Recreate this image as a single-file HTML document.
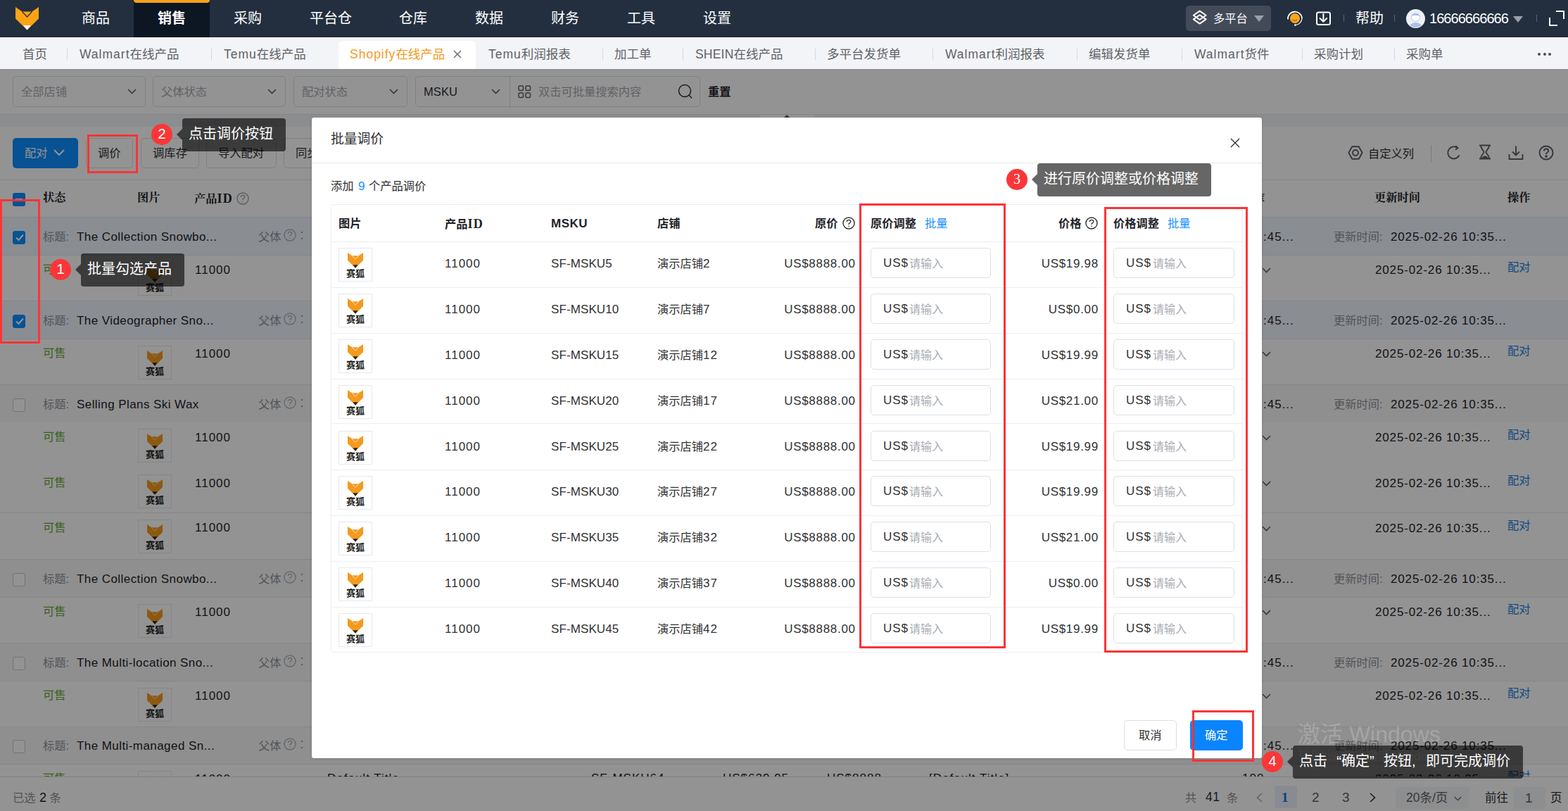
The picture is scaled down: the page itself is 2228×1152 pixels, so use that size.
<!DOCTYPE html><html><head><meta charset="utf-8"><title>批量调价</title><style>
*{box-sizing:border-box;margin:0;padding:0}
html,body{width:2228px;height:1152px;overflow:hidden;background:#fff}
body{position:relative;font-family:"Liberation Sans","Noto Sans CJK SC",sans-serif;color:#303133;font-size:16.25px}
.abs,.t,.b{position:absolute}
.t{white-space:nowrap;line-height:1}
.se{font-family:"Liberation Serif","Noto Serif CJK SC",serif;font-weight:bold}
svg{position:absolute;overflow:visible}
.nav{left:0;top:0;width:2228px;height:53px;background:#232f3f}
.navi{color:#fff;font-size:20px;top:16px}
.tabbar{left:0;top:53px;width:2228px;height:45px;background:#f3f4f8}
.tab{font-size:17.5px;color:#5f6266}
.tdv{top:69px;width:1px;height:17px;background:#d6d8dd}
.sel{top:108px;height:44px;border:1px solid #dcdfe6;border-radius:5px;background:#fff}
.ph{color:#a8abb2;font-size:16.25px;top:122px}
.btn{top:196px;height:43px;border:1px solid #dcdfe6;border-radius:5px;background:#fff}
.btx{top:209px;font-size:16.25px;color:#303133}
.hd{font-size:16.25px;color:#1f2329}
.grow{left:0;width:2228px;height:54px;border-bottom:1px solid #e6e8ec;background:#f8f8f9}
.grow.on{background:#eff4fd}
.crow{left:0;width:2228px;height:65px;border-bottom:1px solid #e6e8ec;background:#fff}
.lb{color:#909399}
.v{letter-spacing:1px;font-size:17px}
.vt{letter-spacing:.43px;font-size:17px}
.vu{letter-spacing:.1px;font-size:17px}
.la{letter-spacing:1px}
.grn{color:#67a83a}
.lnk{color:#1d7fe0}
.cb{left:18px;width:18px;height:19px;border:1px solid #c5c8ce;border-radius:3px;background:#fff}
.cb.on{background:#0c8eff;border-color:#0c8eff}
.th{width:48px;height:48px;border:1px solid #e7e8eb;background:#fff}
.thx{font-size:13px;font-weight:bold;color:#222;letter-spacing:0}
.mh{font-weight:bold;font-size:16.25px;color:#1f2329;top:309px}
.inp{width:171px;height:43px;border:1px solid #dcdfe6;border-radius:5px;background:#fff}
.red{border:3px solid #fd3437}
.tip{border-radius:4px;background:rgba(0,0,0,.6);color:#fff;font-size:20px}
.cir{width:30px;height:30px;border-radius:50%;background:#fb3638;color:#fff;font-size:20px;text-align:center;line-height:30px}
</style></head><body>
<div class="b nav" style="left:0px;top:0px;width:2228px;height:53px;"></div>
<div class="b " style="left:190px;top:0px;width:108px;height:53px;background:#0d1623"></div>
<div class="b " style="left:190px;top:0px;width:108px;height:4px;background:#f9a11b;border-radius:0 0 4px 4px"></div>
<svg style="left:22px;top:9.5px" width="33" height="32.5" viewBox="0 0 33 32.5"><path d="M0 0 L9.5 6.5 L23.5 6.5 L33 0 L33 16.5 L16.5 32.5 L0 16.5Z" fill="#ffa216"/><path d="M9.5 6.5 L16.5 14 L23.5 6.5" fill="none" stroke="#232f3f" stroke-width="1.2"/><path d="M11 26 L22 26 L16.5 32.5Z" fill="#fff"/></svg>
<div class="t navi" style="left:116.0px;top:15.5px;">商品</div>
<div class="t navi" style="left:224.0px;top:15.5px;font-weight:bold">销售</div>
<div class="t navi" style="left:332.0px;top:15.5px;">采购</div>
<div class="t navi" style="left:440.0px;top:15.5px;">平台仓</div>
<div class="t navi" style="left:567.0px;top:15.5px;">仓库</div>
<div class="t navi" style="left:675.0px;top:15.5px;">数据</div>
<div class="t navi" style="left:783.0px;top:15.5px;">财务</div>
<div class="t navi" style="left:891.0px;top:15.5px;">工具</div>
<div class="t navi" style="left:999.0px;top:15.5px;">设置</div>
<div class="b " style="left:1685px;top:8px;width:121px;height:36px;background:#434b58;border-radius:5px"></div>
<svg style="left:1694px;top:14px" width="22" height="22" viewBox="0 0 22 22" fill="none" stroke="#fff" stroke-width="2" stroke-linejoin="round"><path d="M10.7 1.6 L19.6 7.8 L10.7 14 L1.8 7.8Z"/><path d="M10.7 7.2 L19.6 13.4 L10.7 19.6 L1.8 13.4Z"/></svg>
<div class="t " style="left:1724px;top:18px;color:#fff;font-size:16.25px">多平台</div>
<svg style="left:1782px;top:22px" width="14" height="9" viewBox="0 0 14 9"><path d="M0 0H14L7 9Z" fill="#9aa0a9"/></svg>
<svg style="left:1828px;top:14px" width="24" height="24" viewBox="0 0 24 24"><circle cx="12" cy="12" r="7" fill="#fba61c"/><path d="M2 13.5 A10 10 0 0 1 22 12" fill="none" stroke="#fff" stroke-width="1.8"/><path d="M22 12 A10 10 0 0 1 12.5 21.6" fill="none" stroke="#fff" stroke-width="1.2"/><circle cx="12.3" cy="21.6" r="1.3" fill="#fff"/><path d="M9 14 Q12 16.8 15 14" fill="none" stroke="#a86400" stroke-width="1.1"/></svg>
<svg style="left:1869px;top:15px" width="23" height="22" viewBox="0 0 23 22" fill="none" stroke="#fff" stroke-width="2" stroke-linecap="round" stroke-linejoin="round"><rect x="2" y="2.5" width="19" height="17.5" rx="2.5"/><path d="M11.4 5V15.5M6.6 11L11.4 15.8L16.2 11"/></svg>
<div class="b " style="left:1909px;top:21px;width:1px;height:10px;background:#5a6471"></div>
<div class="t navi" style="left:1926px;top:15.5px;">帮助</div>
<div class="b " style="left:1981px;top:21px;width:1px;height:10px;background:#5a6471"></div>
<svg style="left:1998px;top:13px" width="27" height="27" viewBox="0 0 27 27"><circle cx="13.5" cy="13.5" r="13.5" fill="#eef1f6"/><circle cx="13.5" cy="11.5" r="6" fill="#fff" stroke="#b9c9e6" stroke-width="1"/><path d="M7.5 9.5 Q13.5 3 19.5 9.5 Q14 8 7.5 9.5Z" fill="#9db7e6"/><path d="M5 23 Q13.5 15 22 23 Q13.5 29 5 23Z" fill="#a9c0ea"/></svg>
<div class="t navi" style="left:2031px;top:16px;letter-spacing:-.95px;font-size:20px">16666666666</div>
<svg style="left:2150px;top:23px" width="14" height="9" viewBox="0 0 14 9"><path d="M0 0H14L7 9Z" fill="#9aa0a9"/></svg>
<div class="b " style="left:2183px;top:21px;width:1px;height:10px;background:#5a6471"></div>
<svg style="left:2201px;top:15px" width="22" height="22" viewBox="0 0 22 22" fill="none" stroke="#fff" stroke-width="2"><path d="M10 1H21V12M1 10V21H12"/></svg>
<div class="b tabbar" style="left:0px;top:53px;width:2228px;height:45px;"></div>
<div class="b " style="left:481px;top:58px;width:195px;height:40px;background:#fff;border-radius:6px 6px 0 0"></div>
<div class="t tab" style="left:32px;top:68.7px;">首页</div>
<div class="t tab" style="left:113px;top:68.7px;"><span class="la">Walmart</span>在线产品</div>
<div class="t tab" style="left:318px;top:68.7px;"><span class="la">Temu</span>在线产品</div>
<div class="t tab" style="left:497px;top:68.7px;color:#f59a23"><span class="la">Shopify</span>在线产品</div>
<div class="t tab" style="left:694px;top:68.7px;"><span class="la">Temu</span>利润报表</div>
<div class="t tab" style="left:873px;top:68.7px;">加工单</div>
<div class="t tab" style="left:988px;top:68.7px;"><span style="letter-spacing:.2px">SHEIN</span>在线产品</div>
<div class="t tab" style="left:1175px;top:68.7px;">多平台发货单</div>
<div class="t tab" style="left:1343px;top:68.7px;"><span class="la">Walmart</span>利润报表</div>
<div class="t tab" style="left:1547px;top:68.7px;">编辑发货单</div>
<div class="t tab" style="left:1697px;top:68.7px;"><span class="la">Walmart</span>货件</div>
<div class="t tab" style="left:1867px;top:68.7px;">采购计划</div>
<div class="t tab" style="left:1998px;top:68.7px;">采购单</div>
<div class="b tdv" style="left:95px;top:69px;width:1px;height:17px;"></div>
<div class="b tdv" style="left:300px;top:69px;width:1px;height:17px;"></div>
<div class="b tdv" style="left:856px;top:69px;width:1px;height:17px;"></div>
<div class="b tdv" style="left:970px;top:69px;width:1px;height:17px;"></div>
<div class="b tdv" style="left:1158px;top:69px;width:1px;height:17px;"></div>
<div class="b tdv" style="left:1325px;top:69px;width:1px;height:17px;"></div>
<div class="b tdv" style="left:1530px;top:69px;width:1px;height:17px;"></div>
<div class="b tdv" style="left:1679px;top:69px;width:1px;height:17px;"></div>
<div class="b tdv" style="left:1850px;top:69px;width:1px;height:17px;"></div>
<div class="b tdv" style="left:1981px;top:69px;width:1px;height:17px;"></div>
<svg style="left:644px;top:71px" width="12" height="12" viewBox="0 0 12 12" stroke="#6b6e73" stroke-width="1.5"><path d="M1 1L11 11M11 1L1 11"/></svg>
<div class="b " style="left:2185.0px;top:75px;width:4px;height:4px;background:#4a4d52;border-radius:50%"></div>
<div class="b " style="left:2192.5px;top:75px;width:4px;height:4px;background:#4a4d52;border-radius:50%"></div>
<div class="b " style="left:2200.0px;top:75px;width:4px;height:4px;background:#4a4d52;border-radius:50%"></div>
<div class="b " style="left:0px;top:98px;width:2228px;height:65px;background:#fff;border-bottom:1px solid #e4e7ed"></div>
<div class="b " style="left:0px;top:163px;width:2228px;height:17px;background:#f3f4f7"></div>
<div class="b " style="left:1079px;top:163px;width:78px;height:4px;background:#fff"></div>
<svg style="left:1113px;top:163px" width="10" height="5" viewBox="0 0 10 5"><path d="M0 5L5 0L10 5Z" fill="#606266"/></svg>
<div class="b sel" style="left:18px;top:108px;width:189px;height:44px;"></div>
<div class="t ph" style="left:30px;top:122px;">全部店铺</div>
<svg style="left:181px;top:126px" width="13" height="8" viewBox="0 0 13 8" fill="none" stroke="#606266" stroke-width="1.6"><path d="M1 1L6.5 6.5L12 1"/></svg>
<div class="b sel" style="left:217px;top:108px;width:189px;height:44px;"></div>
<div class="t ph" style="left:229px;top:122px;">父体状态</div>
<svg style="left:380px;top:126px" width="13" height="8" viewBox="0 0 13 8" fill="none" stroke="#606266" stroke-width="1.6"><path d="M1 1L6.5 6.5L12 1"/></svg>
<div class="b sel" style="left:417px;top:108px;width:162px;height:44px;"></div>
<div class="t ph" style="left:429px;top:122px;">配对状态</div>
<svg style="left:553px;top:126px" width="13" height="8" viewBox="0 0 13 8" fill="none" stroke="#606266" stroke-width="1.6"><path d="M1 1L6.5 6.5L12 1"/></svg>
<div class="b sel" style="left:590px;top:108px;width:405px;height:44px;"></div>
<div class="b " style="left:724px;top:108px;width:1px;height:44px;background:#dcdfe6"></div>
<div class="t v" style="left:602px;top:122px;color:#303133;font-size:16.5px;letter-spacing:.1px">MSKU</div>
<svg style="left:698px;top:126px" width="13" height="8" viewBox="0 0 13 8" fill="none" stroke="#606266" stroke-width="1.6"><path d="M1 1L6.5 6.5L12 1"/></svg>
<svg style="left:736px;top:121px" width="19" height="19" viewBox="0 0 19 19" fill="none" stroke="#606266" stroke-width="1.5"><rect x="1" y="1" width="6.5" height="6.5" rx="1.5"/><rect x="11" y="1" width="6.5" height="6.5" rx="1.5"/><rect x="1" y="11" width="6.5" height="6.5" rx="1.5"/><rect x="11" y="11" width="6.5" height="6.5" rx="1.5"/></svg>
<div class="t ph" style="left:765px;top:122px;">双击可批量搜索内容</div>
<svg style="left:963px;top:119px" width="22" height="22" viewBox="0 0 22 22" fill="none" stroke="#303133" stroke-width="1.5"><circle cx="10" cy="10" r="8.5"/><path d="M16 16L20 20.5"/></svg>
<div class="t " style="left:1006px;top:122px;font-weight:bold;color:#1f2329">重置</div>
<div class="b " style="left:0px;top:180px;width:2228px;height:76px;background:#fff;border-bottom:1px solid #e4e7ed"></div>
<div class="b " style="left:18px;top:196px;width:93px;height:43px;background:#0c8eff;border-radius:5px"></div>
<div class="t btx" style="left:35px;top:209px;color:#fff">配对</div>
<svg style="left:76px;top:212px" width="16" height="10" viewBox="0 0 16 10" fill="none" stroke="#fff" stroke-width="2"><path d="M1 1L8 8L15 1"/></svg>
<div class="b btn" style="left:122px;top:196px;width:67px;height:43px;"></div>
<div class="t btx" style="left:139px;top:209px;">调价</div>
<div class="b btn" style="left:200px;top:196px;width:83px;height:43px;"></div>
<div class="t btx" style="left:217px;top:209px;">调库存</div>
<div class="b btn" style="left:293px;top:196px;width:100px;height:43px;"></div>
<div class="t btx" style="left:310px;top:209px;">导入配对</div>
<div class="b btn" style="left:403px;top:196px;width:100px;height:43px;"></div>
<div class="t btx" style="left:420px;top:209px;">同步</div>
<svg style="left:1915px;top:206px" width="22" height="22" viewBox="0 0 22 22" fill="none" stroke="#5d6066" stroke-width="1.9" stroke-linejoin="round"><path d="M6.2 2.2H15.8L20.6 11L15.8 19.8H6.2L1.4 11Z"/><circle cx="11" cy="11" r="4"/></svg>
<div class="t btx" style="left:1944px;top:210px;">自定义列</div>
<div class="b " style="left:2033px;top:206px;width:1px;height:24px;background:#d0d3d9"></div>
<svg style="left:2055px;top:206px" width="22" height="22" viewBox="0 0 22 22" fill="none" stroke="#5d6066" stroke-width="1.9"><path d="M18.5 14.5A8.5 8.5 0 1 1 16 4.2"/><path d="M13.2 1.2L16.6 4.3L13 6.8" stroke-linejoin="round"/></svg>
<svg style="left:2100px;top:205px" width="20" height="22" viewBox="0 0 20 22" fill="none" stroke="#5d6066" stroke-width="1.9" stroke-linejoin="round"><path d="M2 1.5H18M2 20.5H18M4 1.5C4 7 8.5 8.5 8.5 11C8.5 13.5 4 15 4 20.5M16 1.5C16 7 11.5 8.5 11.5 11C11.5 13.5 16 15 16 20.5"/><path d="M6.5 19.5Q10 15.5 13.5 19.5Z" fill="#5d6066"/></svg>
<svg style="left:2143px;top:206px" width="22" height="22" viewBox="0 0 22 22" fill="none" stroke="#5d6066" stroke-width="1.9"><path d="M11 1.5V14M6 9.5L11 14.5L16 9.5M1.5 13V20H20.5V13"/></svg>
<svg style="left:2186px;top:206px" width="22" height="22" viewBox="0 0 22 22" fill="none" stroke="#5d6066" stroke-width="1.9"><circle cx="11" cy="11" r="9.5"/><path d="M7.8 8.5Q8 5.5 11 5.5Q14.2 5.5 14.2 8.3Q14.2 10 11.8 11.2Q11 11.7 11 13.2"/><circle cx="11" cy="16" r=".9" fill="#5d6066"/></svg>
<div class="b " style="left:0px;top:256px;width:2228px;height:53px;background:#fff;border-bottom:1px solid #e4e7ed"></div>
<div class="b " style="left:18px;top:274px;width:18px;height:19px;background:#0c8eff;border-radius:3px"></div>
<div class="b " style="left:22px;top:281.5px;width:10px;height:2.5px;background:#fff"></div>
<div class="t hd se" style="left:61px;top:273px;">状态</div>
<div class="t hd se" style="left:195px;top:273px;">图片</div>
<div class="t hd se" style="left:276px;top:273px;">产品<span style="font-size:18px;letter-spacing:1.2px">ID</span></div>
<svg style="left:336px;top:273px" width="18" height="18" viewBox="0 0 18 18" fill="none" stroke="#a0a3a9" stroke-width="1.4"><circle cx="9" cy="9" r="8"/><path d="M6.3 7Q6.5 4.4 9 4.4Q11.7 4.4 11.7 6.8Q11.7 8.2 9.8 9.2Q9 9.7 9 11"/><circle cx="9" cy="13.3" r=".8" fill="#a0a3a9" stroke="none"/></svg>
<div class="b" style="left:1793px;top:270px;width:5px;height:24px;overflow:hidden"><div class="t hd se" style="left:-12px;top:4.5px">库</div></div>
<div class="t hd se" style="left:1953px;top:273px;">更新时间</div>
<div class="t hd se" style="left:2142px;top:273px;">操作</div>
<div class="b grow on" style="left:0px;top:309px;width:2228px;height:54px;"></div>
<div class="b cb on" style="left:18px;top:328px;width:18px;height:19px;"><svg style="left:3px;top:3px" width="12" height="11" viewBox="0 0 12 11" fill="none" stroke="#fff" stroke-width="2"><path d="M1 5.5L4.5 9L11 1.5"/></svg></div>
<div class="t lb" style="left:61px;top:328px;">标题:</div>
<div class="t vt" style="left:109px;top:328px;color:#1f2329">The Collection Snowbo...</div>
<div class="t lb" style="left:367px;top:328px;">父体</div>
<svg style="left:403px;top:325px" width="18" height="18" viewBox="0 0 18 18" fill="none" stroke="#b0b4bb" stroke-width="1.4"><circle cx="9" cy="9" r="8"/><path d="M6.3 7Q6.5 4.4 9 4.4Q11.7 4.4 11.7 6.8Q11.7 8.2 9.8 9.2Q9 9.7 9 11"/><circle cx="9" cy="13.3" r=".8" fill="#b0b4bb" stroke="none"/></svg>
<div class="b " style="left:428px;top:329px;width:2px;height:2px;background:#9a9da3"></div>
<div class="b " style="left:428px;top:338px;width:2px;height:2px;background:#9a9da3"></div>
<div class="t v" style="left:1795px;top:328px;color:#1f2329">:45...</div>
<div class="t lb" style="left:1895px;top:328px;">更新时间:</div>
<div class="t v" style="left:1976px;top:328px;color:#1f2329;letter-spacing:.85px">2025-02-26 10:35...</div>
<div class="b grow on" style="left:0px;top:428px;width:2228px;height:54px;"></div>
<div class="b cb on" style="left:18px;top:447px;width:18px;height:19px;"><svg style="left:3px;top:3px" width="12" height="11" viewBox="0 0 12 11" fill="none" stroke="#fff" stroke-width="2"><path d="M1 5.5L4.5 9L11 1.5"/></svg></div>
<div class="t lb" style="left:61px;top:447px;">标题:</div>
<div class="t vt" style="left:109px;top:447px;color:#1f2329">The Videographer Sno...</div>
<div class="t lb" style="left:367px;top:447px;">父体</div>
<svg style="left:403px;top:444px" width="18" height="18" viewBox="0 0 18 18" fill="none" stroke="#b0b4bb" stroke-width="1.4"><circle cx="9" cy="9" r="8"/><path d="M6.3 7Q6.5 4.4 9 4.4Q11.7 4.4 11.7 6.8Q11.7 8.2 9.8 9.2Q9 9.7 9 11"/><circle cx="9" cy="13.3" r=".8" fill="#b0b4bb" stroke="none"/></svg>
<div class="b " style="left:428px;top:448px;width:2px;height:2px;background:#9a9da3"></div>
<div class="b " style="left:428px;top:457px;width:2px;height:2px;background:#9a9da3"></div>
<div class="t v" style="left:1795px;top:447px;color:#1f2329">:45...</div>
<div class="t lb" style="left:1895px;top:447px;">更新时间:</div>
<div class="t v" style="left:1976px;top:447px;color:#1f2329;letter-spacing:.85px">2025-02-26 10:35...</div>
<div class="b grow" style="left:0px;top:547px;width:2228px;height:54px;"></div>
<div class="b cb" style="left:18px;top:566px;width:18px;height:19px;"></div>
<div class="t lb" style="left:61px;top:566px;">标题:</div>
<div class="t vt" style="left:109px;top:566px;color:#1f2329">Selling Plans Ski Wax</div>
<div class="t lb" style="left:367px;top:566px;">父体</div>
<svg style="left:403px;top:563px" width="18" height="18" viewBox="0 0 18 18" fill="none" stroke="#b0b4bb" stroke-width="1.4"><circle cx="9" cy="9" r="8"/><path d="M6.3 7Q6.5 4.4 9 4.4Q11.7 4.4 11.7 6.8Q11.7 8.2 9.8 9.2Q9 9.7 9 11"/><circle cx="9" cy="13.3" r=".8" fill="#b0b4bb" stroke="none"/></svg>
<div class="b " style="left:428px;top:567px;width:2px;height:2px;background:#9a9da3"></div>
<div class="b " style="left:428px;top:576px;width:2px;height:2px;background:#9a9da3"></div>
<div class="t v" style="left:1795px;top:566px;color:#1f2329">:45...</div>
<div class="t lb" style="left:1895px;top:566px;">更新时间:</div>
<div class="t v" style="left:1976px;top:566px;color:#1f2329;letter-spacing:.85px">2025-02-26 10:35...</div>
<div class="b grow" style="left:0px;top:795px;width:2228px;height:54px;"></div>
<div class="b cb" style="left:18px;top:814px;width:18px;height:19px;"></div>
<div class="t lb" style="left:61px;top:814px;">标题:</div>
<div class="t vt" style="left:109px;top:814px;color:#1f2329">The Collection Snowbo...</div>
<div class="t lb" style="left:367px;top:814px;">父体</div>
<svg style="left:403px;top:811px" width="18" height="18" viewBox="0 0 18 18" fill="none" stroke="#b0b4bb" stroke-width="1.4"><circle cx="9" cy="9" r="8"/><path d="M6.3 7Q6.5 4.4 9 4.4Q11.7 4.4 11.7 6.8Q11.7 8.2 9.8 9.2Q9 9.7 9 11"/><circle cx="9" cy="13.3" r=".8" fill="#b0b4bb" stroke="none"/></svg>
<div class="b " style="left:428px;top:815px;width:2px;height:2px;background:#9a9da3"></div>
<div class="b " style="left:428px;top:824px;width:2px;height:2px;background:#9a9da3"></div>
<div class="t v" style="left:1795px;top:814px;color:#1f2329">:45...</div>
<div class="t lb" style="left:1895px;top:814px;">更新时间:</div>
<div class="t v" style="left:1976px;top:814px;color:#1f2329;letter-spacing:.85px">2025-02-26 10:35...</div>
<div class="b grow" style="left:0px;top:914px;width:2228px;height:54px;"></div>
<div class="b cb" style="left:18px;top:933px;width:18px;height:19px;"></div>
<div class="t lb" style="left:61px;top:933px;">标题:</div>
<div class="t vt" style="left:109px;top:933px;color:#1f2329">The Multi-location Sno...</div>
<div class="t lb" style="left:367px;top:933px;">父体</div>
<svg style="left:403px;top:930px" width="18" height="18" viewBox="0 0 18 18" fill="none" stroke="#b0b4bb" stroke-width="1.4"><circle cx="9" cy="9" r="8"/><path d="M6.3 7Q6.5 4.4 9 4.4Q11.7 4.4 11.7 6.8Q11.7 8.2 9.8 9.2Q9 9.7 9 11"/><circle cx="9" cy="13.3" r=".8" fill="#b0b4bb" stroke="none"/></svg>
<div class="b " style="left:428px;top:934px;width:2px;height:2px;background:#9a9da3"></div>
<div class="b " style="left:428px;top:943px;width:2px;height:2px;background:#9a9da3"></div>
<div class="t v" style="left:1795px;top:933px;color:#1f2329">:45...</div>
<div class="t lb" style="left:1895px;top:933px;">更新时间:</div>
<div class="t v" style="left:1976px;top:933px;color:#1f2329;letter-spacing:.85px">2025-02-26 10:35...</div>
<div class="b grow" style="left:0px;top:1032px;width:2228px;height:54px;"></div>
<div class="b cb" style="left:18px;top:1051px;width:18px;height:19px;"></div>
<div class="t lb" style="left:61px;top:1051px;">标题:</div>
<div class="t vt" style="left:109px;top:1051px;color:#1f2329">The Multi-managed Sn...</div>
<div class="t lb" style="left:367px;top:1051px;">父体</div>
<svg style="left:403px;top:1048px" width="18" height="18" viewBox="0 0 18 18" fill="none" stroke="#b0b4bb" stroke-width="1.4"><circle cx="9" cy="9" r="8"/><path d="M6.3 7Q6.5 4.4 9 4.4Q11.7 4.4 11.7 6.8Q11.7 8.2 9.8 9.2Q9 9.7 9 11"/><circle cx="9" cy="13.3" r=".8" fill="#b0b4bb" stroke="none"/></svg>
<div class="b " style="left:428px;top:1052px;width:2px;height:2px;background:#9a9da3"></div>
<div class="b " style="left:428px;top:1061px;width:2px;height:2px;background:#9a9da3"></div>
<div class="t v" style="left:1795px;top:1051px;color:#1f2329">:45...</div>
<div class="t lb" style="left:1895px;top:1051px;">更新时间:</div>
<div class="t v" style="left:1976px;top:1051px;color:#1f2329;letter-spacing:.85px">2025-02-26 10:35...</div>
<div class="b crow" style="left:0px;top:363px;width:2228px;height:65px;"></div>
<div class="t grn" style="left:61px;top:374px;">可售</div>
<div class="b th" style="left:196px;top:372px;width:48px;height:48px;"></div>
<svg style="left:209px;top:378.5px" width="22" height="21.7" viewBox="0 0 33 32.5"><path d="M0 0 L9.5 6.5 L23.5 6.5 L33 0 L33 16.5 L16.5 32.5 L0 16.5Z" fill="#f39a1f"/><path d="M9.5 6.5 L16.5 14 L23.5 6.5" fill="none" stroke="#fff" stroke-width="1"/><path d="M11 26 L22 26 L16.5 32.5Z" fill="#222"/></svg>
<div class="t thx" style="left:207px;top:401.5px;">赛狐</div>
<div class="t v" style="left:277px;top:374.5px;color:#1f2329">11000</div>
<svg style="left:1793px;top:380px" width="13" height="8" viewBox="0 0 13 8" fill="none" stroke="#606266" stroke-width="1.6"><path d="M1 1L6.5 6.5L12 1"/></svg>
<div class="t v" style="left:1954px;top:375px;color:#1f2329;letter-spacing:.85px">2025-02-26 10:35...</div>
<div class="t lnk" style="left:2142px;top:371px;">配对</div>
<div class="b crow" style="left:0px;top:482px;width:2228px;height:65px;"></div>
<div class="t grn" style="left:61px;top:493px;">可售</div>
<div class="b th" style="left:196px;top:491px;width:48px;height:48px;"></div>
<svg style="left:209px;top:497.5px" width="22" height="21.7" viewBox="0 0 33 32.5"><path d="M0 0 L9.5 6.5 L23.5 6.5 L33 0 L33 16.5 L16.5 32.5 L0 16.5Z" fill="#f39a1f"/><path d="M9.5 6.5 L16.5 14 L23.5 6.5" fill="none" stroke="#fff" stroke-width="1"/><path d="M11 26 L22 26 L16.5 32.5Z" fill="#222"/></svg>
<div class="t thx" style="left:207px;top:520.5px;">赛狐</div>
<div class="t v" style="left:277px;top:493.5px;color:#1f2329">11000</div>
<svg style="left:1793px;top:499px" width="13" height="8" viewBox="0 0 13 8" fill="none" stroke="#606266" stroke-width="1.6"><path d="M1 1L6.5 6.5L12 1"/></svg>
<div class="t v" style="left:1954px;top:494px;color:#1f2329;letter-spacing:.85px">2025-02-26 10:35...</div>
<div class="t lnk" style="left:2142px;top:490px;">配对</div>
<div class="b crow" style="left:0px;top:600px;width:2228px;height:65px;"></div>
<div class="t grn" style="left:61px;top:612px;">可售</div>
<div class="b th" style="left:196px;top:609px;width:48px;height:48px;"></div>
<svg style="left:209px;top:615.5px" width="22" height="21.7" viewBox="0 0 33 32.5"><path d="M0 0 L9.5 6.5 L23.5 6.5 L33 0 L33 16.5 L16.5 32.5 L0 16.5Z" fill="#f39a1f"/><path d="M9.5 6.5 L16.5 14 L23.5 6.5" fill="none" stroke="#fff" stroke-width="1"/><path d="M11 26 L22 26 L16.5 32.5Z" fill="#222"/></svg>
<div class="t thx" style="left:207px;top:638.5px;">赛狐</div>
<div class="t v" style="left:277px;top:612.5px;color:#1f2329">11000</div>
<svg style="left:1793px;top:618px" width="13" height="8" viewBox="0 0 13 8" fill="none" stroke="#606266" stroke-width="1.6"><path d="M1 1L6.5 6.5L12 1"/></svg>
<div class="t v" style="left:1954px;top:613px;color:#1f2329;letter-spacing:.85px">2025-02-26 10:35...</div>
<div class="t lnk" style="left:2142px;top:609px;">配对</div>
<div class="b crow" style="left:0px;top:664px;width:2228px;height:65px;"></div>
<div class="t grn" style="left:61px;top:677px;">可售</div>
<div class="b th" style="left:196px;top:674px;width:48px;height:48px;"></div>
<svg style="left:209px;top:680.5px" width="22" height="21.7" viewBox="0 0 33 32.5"><path d="M0 0 L9.5 6.5 L23.5 6.5 L33 0 L33 16.5 L16.5 32.5 L0 16.5Z" fill="#f39a1f"/><path d="M9.5 6.5 L16.5 14 L23.5 6.5" fill="none" stroke="#fff" stroke-width="1"/><path d="M11 26 L22 26 L16.5 32.5Z" fill="#222"/></svg>
<div class="t thx" style="left:207px;top:703.5px;">赛狐</div>
<div class="t v" style="left:277px;top:677.5px;color:#1f2329">11000</div>
<svg style="left:1793px;top:683px" width="13" height="8" viewBox="0 0 13 8" fill="none" stroke="#606266" stroke-width="1.6"><path d="M1 1L6.5 6.5L12 1"/></svg>
<div class="t v" style="left:1954px;top:678px;color:#1f2329;letter-spacing:.85px">2025-02-26 10:35...</div>
<div class="t lnk" style="left:2142px;top:674px;">配对</div>
<div class="b crow" style="left:0px;top:729.5px;width:2228px;height:65px;"></div>
<div class="t grn" style="left:61px;top:740.5px;">可售</div>
<div class="b th" style="left:196px;top:738.0px;width:48px;height:48px;"></div>
<svg style="left:209px;top:744.5px" width="22" height="21.7" viewBox="0 0 33 32.5"><path d="M0 0 L9.5 6.5 L23.5 6.5 L33 0 L33 16.5 L16.5 32.5 L0 16.5Z" fill="#f39a1f"/><path d="M9.5 6.5 L16.5 14 L23.5 6.5" fill="none" stroke="#fff" stroke-width="1"/><path d="M11 26 L22 26 L16.5 32.5Z" fill="#222"/></svg>
<div class="t thx" style="left:207px;top:767.5px;">赛狐</div>
<div class="t v" style="left:277px;top:741.0px;color:#1f2329">11000</div>
<svg style="left:1793px;top:746.5px" width="13" height="8" viewBox="0 0 13 8" fill="none" stroke="#606266" stroke-width="1.6"><path d="M1 1L6.5 6.5L12 1"/></svg>
<div class="t v" style="left:1954px;top:741.5px;color:#1f2329;letter-spacing:.85px">2025-02-26 10:35...</div>
<div class="t lnk" style="left:2142px;top:737.5px;">配对</div>
<div class="b crow" style="left:0px;top:849px;width:2228px;height:65px;"></div>
<div class="t grn" style="left:61px;top:860px;">可售</div>
<div class="b th" style="left:196px;top:858px;width:48px;height:48px;"></div>
<svg style="left:209px;top:864.5px" width="22" height="21.7" viewBox="0 0 33 32.5"><path d="M0 0 L9.5 6.5 L23.5 6.5 L33 0 L33 16.5 L16.5 32.5 L0 16.5Z" fill="#f39a1f"/><path d="M9.5 6.5 L16.5 14 L23.5 6.5" fill="none" stroke="#fff" stroke-width="1"/><path d="M11 26 L22 26 L16.5 32.5Z" fill="#222"/></svg>
<div class="t thx" style="left:207px;top:887.5px;">赛狐</div>
<div class="t v" style="left:277px;top:860.5px;color:#1f2329">11000</div>
<svg style="left:1793px;top:866px" width="13" height="8" viewBox="0 0 13 8" fill="none" stroke="#606266" stroke-width="1.6"><path d="M1 1L6.5 6.5L12 1"/></svg>
<div class="t v" style="left:1954px;top:861px;color:#1f2329;letter-spacing:.85px">2025-02-26 10:35...</div>
<div class="t lnk" style="left:2142px;top:857px;">配对</div>
<div class="b crow" style="left:0px;top:968px;width:2228px;height:65px;"></div>
<div class="t grn" style="left:61px;top:979px;">可售</div>
<div class="b th" style="left:196px;top:977px;width:48px;height:48px;"></div>
<svg style="left:209px;top:983.5px" width="22" height="21.7" viewBox="0 0 33 32.5"><path d="M0 0 L9.5 6.5 L23.5 6.5 L33 0 L33 16.5 L16.5 32.5 L0 16.5Z" fill="#f39a1f"/><path d="M9.5 6.5 L16.5 14 L23.5 6.5" fill="none" stroke="#fff" stroke-width="1"/><path d="M11 26 L22 26 L16.5 32.5Z" fill="#222"/></svg>
<div class="t thx" style="left:207px;top:1006.5px;">赛狐</div>
<div class="t v" style="left:277px;top:979.5px;color:#1f2329">11000</div>
<svg style="left:1793px;top:985px" width="13" height="8" viewBox="0 0 13 8" fill="none" stroke="#606266" stroke-width="1.6"><path d="M1 1L6.5 6.5L12 1"/></svg>
<div class="t v" style="left:1954px;top:980px;color:#1f2329;letter-spacing:.85px">2025-02-26 10:35...</div>
<div class="t lnk" style="left:2142px;top:976px;">配对</div>
<div class="b crow" style="left:0px;top:1086px;width:2228px;height:65px;"></div>
<div class="t grn" style="left:61px;top:1097px;">可售</div>
<div class="b th" style="left:196px;top:1095px;width:48px;height:48px;"></div>
<svg style="left:209px;top:1101.5px" width="22" height="21.7" viewBox="0 0 33 32.5"><path d="M0 0 L9.5 6.5 L23.5 6.5 L33 0 L33 16.5 L16.5 32.5 L0 16.5Z" fill="#f39a1f"/><path d="M9.5 6.5 L16.5 14 L23.5 6.5" fill="none" stroke="#fff" stroke-width="1"/><path d="M11 26 L22 26 L16.5 32.5Z" fill="#222"/></svg>
<div class="t thx" style="left:207px;top:1124.5px;">赛狐</div>
<div class="t v" style="left:277px;top:1097.5px;color:#1f2329">11000</div>
<svg style="left:1793px;top:1103px" width="13" height="8" viewBox="0 0 13 8" fill="none" stroke="#606266" stroke-width="1.6"><path d="M1 1L6.5 6.5L12 1"/></svg>
<div class="t v" style="left:1954px;top:1098px;color:#1f2329;letter-spacing:.85px">2025-02-26 10:35...</div>
<div class="t lnk" style="left:2142px;top:1094px;">配对</div>
<div class="t v" style="left:465px;top:1097px;color:#1f2329">Default Title</div>
<div class="t v" style="left:840px;top:1097px;color:#1f2329">SF-MSKU64</div>
<div class="t v" style="left:1027px;top:1097px;color:#1f2329">US$629.95</div>
<div class="t v" style="left:1175px;top:1097px;color:#1f2329">US$8888</div>
<div class="t v" style="left:1320px;top:1097px;color:#1f2329">[Default Title]</div>
<div class="t v" style="left:1765px;top:1097px;color:#1f2329">100</div>
<div class="b " style="left:0px;top:1103px;width:2228px;height:49px;background:#fff;border-top:1px solid #dcdfe6"></div>
<div class="t lb" style="left:18px;top:1125px;font-size:16.25px">已选</div>
<div class="t " style="left:56px;top:1124px;color:#1f2329;font-size:18px">2</div>
<div class="t lb" style="left:70.5px;top:1125px;font-size:16.25px">条</div>
<div class="t lb" style="left:1684px;top:1125px;font-size:16.25px">共</div>
<div class="t " style="left:1713px;top:1124px;color:#303133;font-size:17.5px;letter-spacing:.6px">41</div>
<div class="t lb" style="left:1743px;top:1125px;font-size:16.25px">条</div>
<svg style="left:1785px;top:1126px" width="9" height="14" viewBox="0 0 9 14" fill="none" stroke="#a8abb2" stroke-width="1.6"><path d="M8 1L1.5 7L8 13"/></svg>
<div class="b " style="left:1811px;top:1116px;width:32px;height:32px;background:#ecf3fd"></div>
<div class="t se" style="left:1821px;top:1123px;color:#1672d6;font-size:19px">1</div>
<div class="t v" style="left:1864px;top:1123px;color:#606266;font-size:19px">2</div>
<div class="t v" style="left:1907px;top:1123px;color:#606266;font-size:19px">3</div>
<svg style="left:1946px;top:1126px" width="9" height="14" viewBox="0 0 9 14" fill="none" stroke="#303133" stroke-width="1.6"><path d="M1 1L7.5 7L1 13"/></svg>
<div class="b " style="left:1983px;top:1118px;width:105px;height:31px;background:#f5f6f8;border-radius:4px"></div>
<div class="t " style="left:1998px;top:1125px;color:#606266;font-size:17.5px">20条/页</div>
<svg style="left:2066px;top:1131px" width="11" height="7" viewBox="0 0 13 8" fill="none" stroke="#606266" stroke-width="1.6"><path d="M1 1L6.5 6.5L12 1"/></svg>
<div class="t " style="left:2110px;top:1125px;color:#303133;font-size:16.5px">前往</div>
<div class="b " style="left:2150px;top:1118px;width:46px;height:31px;background:#f5f6f8;border-radius:4px"></div>
<div class="t v" style="left:2167px;top:1124px;color:#606266;font-size:19px">1</div>
<div class="t " style="left:2203px;top:1125px;color:#303133;font-size:16.5px">页</div>
<div class="b " style="left:0px;top:98px;width:2228px;height:1054px;background:rgba(0,0,0,.425)"></div>
<div class="b " style="left:443px;top:167px;width:1350px;height:910px;background:#fff;border-radius:3px;box-shadow:0 1px 4px rgba(0,0,0,.12)"></div>
<div class="t " style="left:470px;top:188.7px;font-size:18.75px;color:#303133">批量调价</div>
<svg style="left:1748px;top:196px" width="14" height="14" viewBox="0 0 14 14" stroke="#303133" stroke-width="1.4"><path d="M1 1L13 13M13 1L1 13"/></svg>
<div class="b " style="left:443px;top:231px;width:1350px;height:1px;background:#e4e7ed"></div>
<div class="t " style="left:470px;top:256.2px;color:#303133;font-size:16.25px">添加</div>
<div class="t " style="left:509px;top:256px;color:#1890ff;font-size:17px">9</div>
<div class="t " style="left:524px;top:256.2px;color:#303133;font-size:16.25px">个产品调价</div>
<div class="b " style="left:470px;top:290px;width:1296px;height:637px;border:1px solid #ebeef5;border-radius:5px"></div>
<div class="b " style="left:471px;top:343px;width:1294px;height:1px;background:#ebeef5"></div>
<div class="b " style="left:471px;top:408px;width:1294px;height:1px;background:#ebeef5"></div>
<div class="b " style="left:471px;top:473px;width:1294px;height:1px;background:#ebeef5"></div>
<div class="b " style="left:471px;top:538px;width:1294px;height:1px;background:#ebeef5"></div>
<div class="b " style="left:471px;top:601px;width:1294px;height:1px;background:#ebeef5"></div>
<div class="b " style="left:471px;top:667px;width:1294px;height:1px;background:#ebeef5"></div>
<div class="b " style="left:471px;top:732px;width:1294px;height:1px;background:#ebeef5"></div>
<div class="b " style="left:471px;top:797px;width:1294px;height:1px;background:#ebeef5"></div>
<div class="b " style="left:471px;top:861.5px;width:1294px;height:1px;background:#ebeef5"></div>
<div class="t mh" style="left:481px;top:309px;">图片</div>
<div class="t mh" style="left:632px;top:309px;">产品<span class="se" style="font-size:18px;letter-spacing:1.2px">ID</span></div>
<div class="t mh" style="left:783px;top:309px;font-size:17px;letter-spacing:.5px">MSKU</div>
<div class="t mh" style="left:934px;top:309px;">店铺</div>
<div class="t mh" style="left:1158px;top:309px;">原价</div>
<svg style="left:1197px;top:308px" width="18" height="18" viewBox="0 0 18 18" fill="none" stroke="#303133" stroke-width="1.4"><circle cx="9" cy="9" r="8"/><path d="M6.3 7Q6.5 4.4 9 4.4Q11.7 4.4 11.7 6.8Q11.7 8.2 9.8 9.2Q9 9.7 9 11"/><circle cx="9" cy="13.3" r=".8" fill="#303133" stroke="none"/></svg>
<div class="t mh" style="left:1237px;top:309px;">原价调整</div>
<div class="t " style="left:1314px;top:308.7px;color:#1890ff;font-size:16.25px">批量</div>
<div class="t mh" style="left:1504px;top:309px;">价格</div>
<svg style="left:1542px;top:308px" width="18" height="18" viewBox="0 0 18 18" fill="none" stroke="#303133" stroke-width="1.4"><circle cx="9" cy="9" r="8"/><path d="M6.3 7Q6.5 4.4 9 4.4Q11.7 4.4 11.7 6.8Q11.7 8.2 9.8 9.2Q9 9.7 9 11"/><circle cx="9" cy="13.3" r=".8" fill="#303133" stroke="none"/></svg>
<div class="t mh" style="left:1582px;top:309px;">价格调整</div>
<div class="t " style="left:1659px;top:308.7px;color:#1890ff;font-size:16.25px">批量</div>
<div class="b th" style="left:481px;top:352px;width:48px;height:48px;"></div>
<svg style="left:494px;top:359px" width="22" height="21.7" viewBox="0 0 33 32.5"><path d="M0 0 L9.5 6.5 L23.5 6.5 L33 0 L33 16.5 L16.5 32.5 L0 16.5Z" fill="#f39a1f"/><path d="M9.5 6.5 L16.5 14 L23.5 6.5" fill="none" stroke="#fff" stroke-width="1"/><path d="M11 26 L22 26 L16.5 32.5Z" fill="#222"/></svg>
<div class="t thx" style="left:492px;top:382px;">赛狐</div>
<div class="t v" style="left:632px;top:366px;">11000</div>
<div class="t vu" style="left:783px;top:366px;">SF-MSKU5</div>
<div class="t " style="left:934px;top:365.5px;">演示店铺<span class="v">2</span></div>
<div class="t v" style="right:1012.3px;top:366px;letter-spacing:.7px">US$8888.00</div>
<div class="b inp" style="left:1237px;top:352px;width:171px;height:43px;"></div>
<div class="t v" style="left:1255px;top:365px;">US$</div>
<div class="t " style="left:1292px;top:366.7px;color:#a8abb2;font-size:16px">请输入</div>
<div class="t v" style="right:667.0999999999999px;top:366px;letter-spacing:.7px">US$19.98</div>
<div class="b inp" style="left:1582px;top:352px;width:172px;height:43px;"></div>
<div class="t v" style="left:1600px;top:365px;">US$</div>
<div class="t " style="left:1638px;top:366.7px;color:#a8abb2;font-size:16px">请输入</div>
<div class="b th" style="left:481px;top:417px;width:48px;height:48px;"></div>
<svg style="left:494px;top:424px" width="22" height="21.7" viewBox="0 0 33 32.5"><path d="M0 0 L9.5 6.5 L23.5 6.5 L33 0 L33 16.5 L16.5 32.5 L0 16.5Z" fill="#f39a1f"/><path d="M9.5 6.5 L16.5 14 L23.5 6.5" fill="none" stroke="#fff" stroke-width="1"/><path d="M11 26 L22 26 L16.5 32.5Z" fill="#222"/></svg>
<div class="t thx" style="left:492px;top:447px;">赛狐</div>
<div class="t v" style="left:632px;top:431px;">11000</div>
<div class="t vu" style="left:783px;top:431px;">SF-MSKU10</div>
<div class="t " style="left:934px;top:430.5px;">演示店铺<span class="v">7</span></div>
<div class="t v" style="right:1012.3px;top:431px;letter-spacing:.7px">US$8888.00</div>
<div class="b inp" style="left:1237px;top:417px;width:171px;height:43px;"></div>
<div class="t v" style="left:1255px;top:430px;">US$</div>
<div class="t " style="left:1292px;top:431.7px;color:#a8abb2;font-size:16px">请输入</div>
<div class="t v" style="right:667.0999999999999px;top:431px;letter-spacing:.7px">US$0.00</div>
<div class="b inp" style="left:1582px;top:417px;width:172px;height:43px;"></div>
<div class="t v" style="left:1600px;top:430px;">US$</div>
<div class="t " style="left:1638px;top:431.7px;color:#a8abb2;font-size:16px">请输入</div>
<div class="b th" style="left:481px;top:482px;width:48px;height:48px;"></div>
<svg style="left:494px;top:489px" width="22" height="21.7" viewBox="0 0 33 32.5"><path d="M0 0 L9.5 6.5 L23.5 6.5 L33 0 L33 16.5 L16.5 32.5 L0 16.5Z" fill="#f39a1f"/><path d="M9.5 6.5 L16.5 14 L23.5 6.5" fill="none" stroke="#fff" stroke-width="1"/><path d="M11 26 L22 26 L16.5 32.5Z" fill="#222"/></svg>
<div class="t thx" style="left:492px;top:512px;">赛狐</div>
<div class="t v" style="left:632px;top:496px;">11000</div>
<div class="t vu" style="left:783px;top:496px;">SF-MSKU15</div>
<div class="t " style="left:934px;top:495.5px;">演示店铺<span class="v">12</span></div>
<div class="t v" style="right:1012.3px;top:496px;letter-spacing:.7px">US$8888.00</div>
<div class="b inp" style="left:1237px;top:482px;width:171px;height:43px;"></div>
<div class="t v" style="left:1255px;top:495px;">US$</div>
<div class="t " style="left:1292px;top:496.7px;color:#a8abb2;font-size:16px">请输入</div>
<div class="t v" style="right:667.0999999999999px;top:496px;letter-spacing:.7px">US$19.99</div>
<div class="b inp" style="left:1582px;top:482px;width:172px;height:43px;"></div>
<div class="t v" style="left:1600px;top:495px;">US$</div>
<div class="t " style="left:1638px;top:496.7px;color:#a8abb2;font-size:16px">请输入</div>
<div class="b th" style="left:481px;top:547px;width:48px;height:48px;"></div>
<svg style="left:494px;top:554px" width="22" height="21.7" viewBox="0 0 33 32.5"><path d="M0 0 L9.5 6.5 L23.5 6.5 L33 0 L33 16.5 L16.5 32.5 L0 16.5Z" fill="#f39a1f"/><path d="M9.5 6.5 L16.5 14 L23.5 6.5" fill="none" stroke="#fff" stroke-width="1"/><path d="M11 26 L22 26 L16.5 32.5Z" fill="#222"/></svg>
<div class="t thx" style="left:492px;top:577px;">赛狐</div>
<div class="t v" style="left:632px;top:561px;">11000</div>
<div class="t vu" style="left:783px;top:561px;">SF-MSKU20</div>
<div class="t " style="left:934px;top:560.5px;">演示店铺<span class="v">17</span></div>
<div class="t v" style="right:1012.3px;top:561px;letter-spacing:.7px">US$8888.00</div>
<div class="b inp" style="left:1237px;top:547px;width:171px;height:43px;"></div>
<div class="t v" style="left:1255px;top:560px;">US$</div>
<div class="t " style="left:1292px;top:561.7px;color:#a8abb2;font-size:16px">请输入</div>
<div class="t v" style="right:667.0999999999999px;top:561px;letter-spacing:.7px">US$21.00</div>
<div class="b inp" style="left:1582px;top:547px;width:172px;height:43px;"></div>
<div class="t v" style="left:1600px;top:560px;">US$</div>
<div class="t " style="left:1638px;top:561.7px;color:#a8abb2;font-size:16px">请输入</div>
<div class="b th" style="left:481px;top:612px;width:48px;height:48px;"></div>
<svg style="left:494px;top:619px" width="22" height="21.7" viewBox="0 0 33 32.5"><path d="M0 0 L9.5 6.5 L23.5 6.5 L33 0 L33 16.5 L16.5 32.5 L0 16.5Z" fill="#f39a1f"/><path d="M9.5 6.5 L16.5 14 L23.5 6.5" fill="none" stroke="#fff" stroke-width="1"/><path d="M11 26 L22 26 L16.5 32.5Z" fill="#222"/></svg>
<div class="t thx" style="left:492px;top:642px;">赛狐</div>
<div class="t v" style="left:632px;top:626px;">11000</div>
<div class="t vu" style="left:783px;top:626px;">SF-MSKU25</div>
<div class="t " style="left:934px;top:625.5px;">演示店铺<span class="v">22</span></div>
<div class="t v" style="right:1012.3px;top:626px;letter-spacing:.7px">US$8888.00</div>
<div class="b inp" style="left:1237px;top:612px;width:171px;height:43px;"></div>
<div class="t v" style="left:1255px;top:625px;">US$</div>
<div class="t " style="left:1292px;top:626.7px;color:#a8abb2;font-size:16px">请输入</div>
<div class="t v" style="right:667.0999999999999px;top:626px;letter-spacing:.7px">US$19.99</div>
<div class="b inp" style="left:1582px;top:612px;width:172px;height:43px;"></div>
<div class="t v" style="left:1600px;top:625px;">US$</div>
<div class="t " style="left:1638px;top:626.7px;color:#a8abb2;font-size:16px">请输入</div>
<div class="b th" style="left:481px;top:676px;width:48px;height:48px;"></div>
<svg style="left:494px;top:683px" width="22" height="21.7" viewBox="0 0 33 32.5"><path d="M0 0 L9.5 6.5 L23.5 6.5 L33 0 L33 16.5 L16.5 32.5 L0 16.5Z" fill="#f39a1f"/><path d="M9.5 6.5 L16.5 14 L23.5 6.5" fill="none" stroke="#fff" stroke-width="1"/><path d="M11 26 L22 26 L16.5 32.5Z" fill="#222"/></svg>
<div class="t thx" style="left:492px;top:706px;">赛狐</div>
<div class="t v" style="left:632px;top:690px;">11000</div>
<div class="t vu" style="left:783px;top:690px;">SF-MSKU30</div>
<div class="t " style="left:934px;top:689.5px;">演示店铺<span class="v">27</span></div>
<div class="t v" style="right:1012.3px;top:690px;letter-spacing:.7px">US$8888.00</div>
<div class="b inp" style="left:1237px;top:676px;width:171px;height:43px;"></div>
<div class="t v" style="left:1255px;top:689px;">US$</div>
<div class="t " style="left:1292px;top:690.7px;color:#a8abb2;font-size:16px">请输入</div>
<div class="t v" style="right:667.0999999999999px;top:690px;letter-spacing:.7px">US$19.99</div>
<div class="b inp" style="left:1582px;top:676px;width:172px;height:43px;"></div>
<div class="t v" style="left:1600px;top:689px;">US$</div>
<div class="t " style="left:1638px;top:690.7px;color:#a8abb2;font-size:16px">请输入</div>
<div class="b th" style="left:481px;top:741px;width:48px;height:48px;"></div>
<svg style="left:494px;top:748px" width="22" height="21.7" viewBox="0 0 33 32.5"><path d="M0 0 L9.5 6.5 L23.5 6.5 L33 0 L33 16.5 L16.5 32.5 L0 16.5Z" fill="#f39a1f"/><path d="M9.5 6.5 L16.5 14 L23.5 6.5" fill="none" stroke="#fff" stroke-width="1"/><path d="M11 26 L22 26 L16.5 32.5Z" fill="#222"/></svg>
<div class="t thx" style="left:492px;top:771px;">赛狐</div>
<div class="t v" style="left:632px;top:755px;">11000</div>
<div class="t vu" style="left:783px;top:755px;">SF-MSKU35</div>
<div class="t " style="left:934px;top:754.5px;">演示店铺<span class="v">32</span></div>
<div class="t v" style="right:1012.3px;top:755px;letter-spacing:.7px">US$8888.00</div>
<div class="b inp" style="left:1237px;top:741px;width:171px;height:43px;"></div>
<div class="t v" style="left:1255px;top:754px;">US$</div>
<div class="t " style="left:1292px;top:755.7px;color:#a8abb2;font-size:16px">请输入</div>
<div class="t v" style="right:667.0999999999999px;top:755px;letter-spacing:.7px">US$21.00</div>
<div class="b inp" style="left:1582px;top:741px;width:172px;height:43px;"></div>
<div class="t v" style="left:1600px;top:754px;">US$</div>
<div class="t " style="left:1638px;top:755.7px;color:#a8abb2;font-size:16px">请输入</div>
<div class="b th" style="left:481px;top:806px;width:48px;height:48px;"></div>
<svg style="left:494px;top:813px" width="22" height="21.7" viewBox="0 0 33 32.5"><path d="M0 0 L9.5 6.5 L23.5 6.5 L33 0 L33 16.5 L16.5 32.5 L0 16.5Z" fill="#f39a1f"/><path d="M9.5 6.5 L16.5 14 L23.5 6.5" fill="none" stroke="#fff" stroke-width="1"/><path d="M11 26 L22 26 L16.5 32.5Z" fill="#222"/></svg>
<div class="t thx" style="left:492px;top:836px;">赛狐</div>
<div class="t v" style="left:632px;top:820px;">11000</div>
<div class="t vu" style="left:783px;top:820px;">SF-MSKU40</div>
<div class="t " style="left:934px;top:819.5px;">演示店铺<span class="v">37</span></div>
<div class="t v" style="right:1012.3px;top:820px;letter-spacing:.7px">US$8888.00</div>
<div class="b inp" style="left:1237px;top:806px;width:171px;height:43px;"></div>
<div class="t v" style="left:1255px;top:819px;">US$</div>
<div class="t " style="left:1292px;top:820.7px;color:#a8abb2;font-size:16px">请输入</div>
<div class="t v" style="right:667.0999999999999px;top:820px;letter-spacing:.7px">US$0.00</div>
<div class="b inp" style="left:1582px;top:806px;width:172px;height:43px;"></div>
<div class="t v" style="left:1600px;top:819px;">US$</div>
<div class="t " style="left:1638px;top:820.7px;color:#a8abb2;font-size:16px">请输入</div>
<div class="b th" style="left:481px;top:871px;width:48px;height:48px;"></div>
<svg style="left:494px;top:878px" width="22" height="21.7" viewBox="0 0 33 32.5"><path d="M0 0 L9.5 6.5 L23.5 6.5 L33 0 L33 16.5 L16.5 32.5 L0 16.5Z" fill="#f39a1f"/><path d="M9.5 6.5 L16.5 14 L23.5 6.5" fill="none" stroke="#fff" stroke-width="1"/><path d="M11 26 L22 26 L16.5 32.5Z" fill="#222"/></svg>
<div class="t thx" style="left:492px;top:901px;">赛狐</div>
<div class="t v" style="left:632px;top:885px;">11000</div>
<div class="t vu" style="left:783px;top:885px;">SF-MSKU45</div>
<div class="t " style="left:934px;top:884.5px;">演示店铺<span class="v">42</span></div>
<div class="t v" style="right:1012.3px;top:885px;letter-spacing:.7px">US$8888.00</div>
<div class="b inp" style="left:1237px;top:871px;width:171px;height:43px;"></div>
<div class="t v" style="left:1255px;top:884px;">US$</div>
<div class="t " style="left:1292px;top:885.7px;color:#a8abb2;font-size:16px">请输入</div>
<div class="t v" style="right:667.0999999999999px;top:885px;letter-spacing:.7px">US$19.99</div>
<div class="b inp" style="left:1582px;top:871px;width:172px;height:43px;"></div>
<div class="t v" style="left:1600px;top:884px;">US$</div>
<div class="t " style="left:1638px;top:885.7px;color:#a8abb2;font-size:16px">请输入</div>
<div class="b " style="left:1597px;top:1023px;width:75px;height:43px;background:#fff;border:1px solid #dcdfe6;border-radius:5px"></div>
<div class="t " style="left:1618px;top:1036px;color:#303133">取消</div>
<div class="b " style="left:1691px;top:1023px;width:75px;height:43px;background:#0a84ff;border-radius:5px"></div>
<div class="t " style="left:1712px;top:1036px;color:#fff">确定</div>
<div class="t " style="left:1845px;top:1066px;font-size:17px;color:rgba(255,255,255,.2)">转到“设置”以激活 Windows。</div>
<div class="t " style="left:1844px;top:1027px;font-size:32px;color:rgba(255,255,255,.2);letter-spacing:0">激活 Windows</div>
<div class="b red" style="left:0px;top:283px;width:57px;height:205px;"></div>
<div class="b red" style="left:124px;top:191px;width:72px;height:55px;"></div>
<div class="b red" style="left:1221px;top:289px;width:208px;height:632px;"></div>
<div class="b red" style="left:1569px;top:294px;width:204px;height:633px;"></div>
<div class="b red" style="left:1694px;top:1009px;width:88px;height:73px;"></div>
<div class="b " style="left:71px;top:367.5px;width:30px;height:30px;border-radius:50%;background:#fb3638"></div>
<div class="b cir" style="left:71px;top:366.5px;width:30px;height:30px;font-weight:normal;background:none">1</div>
<div class="b tip" style="left:115px;top:360px;width:147px;height:47px;"></div>
<svg style="left:107px;top:374.5px" width="8" height="16" viewBox="0 0 8 16"><path d="M8 0L0 8L8 16Z" fill="rgba(0,0,0,.6)"/></svg>
<div class="t " style="left:124px;top:372.0px;color:#fff;font-size:20px">批量勾选产品</div>
<div class="b " style="left:215px;top:175.5px;width:30px;height:30px;border-radius:50%;background:#fb3638"></div>
<div class="b cir" style="left:215px;top:174.5px;width:30px;height:30px;font-weight:normal;background:none">2</div>
<div class="b tip" style="left:259px;top:168px;width:147px;height:47px;"></div>
<svg style="left:251px;top:182.5px" width="8" height="16" viewBox="0 0 8 16"><path d="M8 0L0 8L8 16Z" fill="rgba(0,0,0,.6)"/></svg>
<div class="t " style="left:268px;top:180.0px;color:#fff;font-size:20px">点击调价按钮</div>
<div class="b " style="left:1430px;top:240px;width:30px;height:30px;border-radius:50%;background:#fb3638"></div>
<div class="b cir se" style="left:1430px;top:239px;width:30px;height:30px;font-weight:normal;background:none">3</div>
<div class="b tip" style="left:1474px;top:232px;width:247px;height:47px;"></div>
<svg style="left:1466px;top:247px" width="8" height="16" viewBox="0 0 8 16"><path d="M8 0L0 8L8 16Z" fill="rgba(0,0,0,.6)"/></svg>
<div class="t " style="left:1483px;top:244.0px;color:#fff;font-size:20px">进行原价调整或价格调整</div>
<div class="b " style="left:1793px;top:1067px;width:30px;height:30px;border-radius:50%;background:#fb3638"></div>
<div class="b cir" style="left:1793px;top:1066px;width:30px;height:30px;font-weight:normal;background:none">4</div>
<div class="b tip" style="left:1837px;top:1059px;width:327px;height:47px;"></div>
<svg style="left:1829px;top:1074px" width="8" height="16" viewBox="0 0 8 16"><path d="M8 0L0 8L8 16Z" fill="rgba(0,0,0,.6)"/></svg>
<div class="t " style="left:1846px;top:1071.0px;color:#fff;font-size:20px">点击<span style="display:inline-block;width:20px;text-align:right">“</span>确定<span style="display:inline-block;width:20px;text-align:left">”</span>按钮<span style="display:inline-block;width:20px;text-align:left">,</span>即可完成调价</div>
</body></html>
